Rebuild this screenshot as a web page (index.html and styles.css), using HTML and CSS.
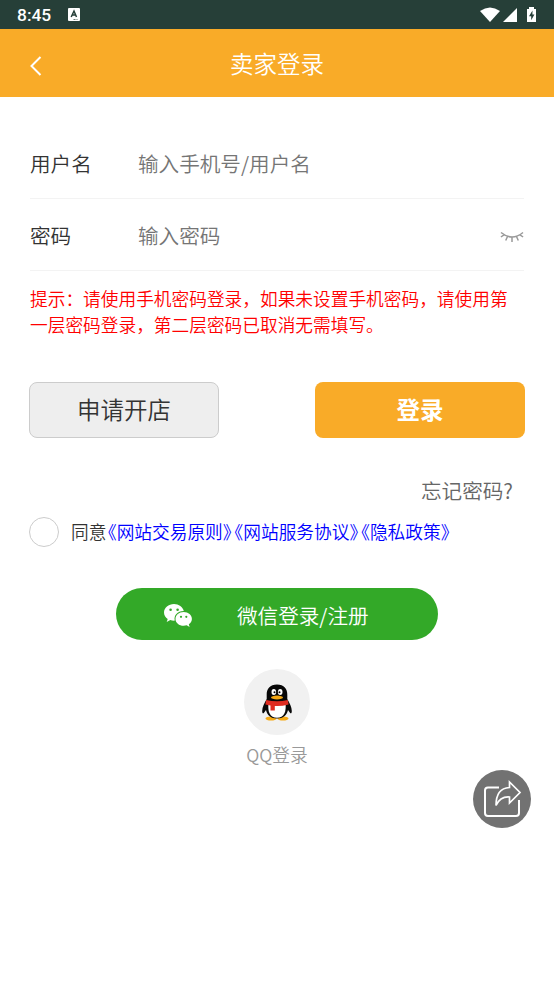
FILE: index.html
```html
<!DOCTYPE html>
<html lang="zh-CN">
<head>
<meta charset="utf-8">
<title>卖家登录</title>
<link rel="stylesheet" href="styles.css">
</head>
<body>
<div class="status">
  <span class="time">8:45</span>
  <svg class="app-icon" viewBox="0 0 12 14"><rect width="12" height="13" rx="1" fill="#fff"/><path d="M3.2 9 6 3l2.500 6M4.200 7h3.500" fill="none" stroke="#263f38" stroke-width="1.500"/><path d="M5.500 11.500h2M8.500 11.500h1" stroke="#263f38" stroke-width=".7"/></svg>
  <svg class="signals" viewBox="0 0 58 18" fill="#fff"><path d="M0 5Q10-2 20 5L10 16Z"/><path d="M23 16 37 2v14Z"/><path d="M49 1h5v2h2v13h-9V3h2Z"/><path d="M52.500 4.500 49 10.200h2.200v4l3.200-5.800h-2Z" fill="#263f38"/></svg>
</div>
<header class="header">
  <svg class="back" viewBox="0 0 12 20"><path d="m10.500 1-9 9 9 9" fill="none" stroke="#fff" stroke-width="2"/></svg>
  <h1>卖家登录</h1>
</header>
<main>
  <label class="field"><span>用户名</span><input type="text" placeholder="输入手机号/用户名"></label>
  <label class="field"><span>密码</span><input type="password" placeholder="输入密码">
    <svg class="eye" viewBox="0 0 24 12" fill="none" stroke="#999" stroke-width="1.500"><path d="M1 1.500Q12 10.500 23 1.500M4 3.900.9 6M7.400 5.700 5.700 9.500M12 6.500V11M16.600 5.700l1.700 3.800M20 3.900 23.100 6"/></svg>
  </label>
  <p class="hint">提示：请使用手机密码登录，如果未设置手机密码，请使用第一层密码登录，第二层密码已取消无需填写。</p>
  <div class="actions"><button class="apply">申请开店</button><button class="login">登录</button></div>
  <a class="forgot">忘记密码?</a>
  <div class="agree"><span class="radio"></span><span class="agree-text">同意<a>《网站交易原则》</a><a>《网站服务协议》</a><a>《隐私政策》</a></span></div>
  <button class="wechat">
    <svg viewBox="0 0 28 23"><path d="M10 0C4.500 0 0 3.800 0 8.500c0 2.700 1.500 5 3.700 6.500l-1 3 3.600-1.900c1.300.4 3 .6 4.500.5C9.500 11.500 13.500 7 19.500 7h.3C18.800 3 14.800 0 10 0Z" fill="#fff"/><path d="M19.700 8c-4.700 0-8.200 3.100-8.200 6.900s3.500 6.900 8.200 6.900c1 0 2-.2 3-.5l2.900 1.600-.8-2.600c1.900-1.300 3.100-3.200 3.100-5.400C27.900 11.100 24.300 8 19.700 8Z" fill="#fff"/><g fill="#33a928"><circle cx="6.600" cy="5.700" r="1.300"/><circle cx="13.600" cy="5.700" r="1.300"/><circle cx="17" cy="12.800" r="1.100"/><circle cx="22.300" cy="12.800" r="1.100"/></g></svg>
    <span>微信登录/注册</span>
  </button>
  <div class="qq">
    <div class="qq-circle">
      <svg viewBox="0 0 30 37"><ellipse cx="9" cy="34.500" rx="5.500" ry="2" fill="#f5a915"/><ellipse cx="21" cy="34.500" rx="5.500" ry="2" fill="#f5a915"/><path d="M15 .5C8 .5 4.500 5 4.700 11v4C2.500 19 .2 23 .2 27c0 2.500 1 3 2 1.500L4 26c1 5 5 8.500 11 8.500S25 31 26 26l1.800 2.500c1 1.500 2 1 2-1.500 0-4-2.300-8-4.500-12v-4C25.500 5 22 .5 15 .5Z" fill="#080808"/><path d="M6.500 19C5.500 28 8 33.800 15 33.800S24.500 28 23.500 19Z" fill="#fff"/><path d="M4.200 16Q15 18.500 25.800 16l.8 4.500Q19 22.500 12.800 22V26.500H8.500v-5L3.400 20.500Z" fill="#df2b20"/><ellipse cx="11.800" cy="8" rx="2.300" ry="3" fill="#fff"/><ellipse cx="18.200" cy="8" rx="2.300" ry="3" fill="#fff"/><circle cx="12.500" cy="8.300" r="1"/><circle cx="17.500" cy="8.300" r="1"/><ellipse cx="15" cy="13.500" rx="6" ry="1.900" fill="#f5a915"/></svg>
    </div>
    <span>QQ登录</span>
  </div>
</main>
<div class="share"><svg viewBox="0 0 58 58" fill="none" stroke="#fff" stroke-width="2"><path d="M26 17.500H15q-3 0-3 3V43q0 3 3 3h28q3 0 3-3V30"/><path d="M23 35.500C23 24 27 18 36.500 17.500V12L47 22.500 36.500 33v-6C30 26.500 26 29 23 35.500Z" stroke-width="1.700"/></svg></div>
</body>
</html>
```

FILE: styles.css
```css
* { box-sizing: border-box; }
body {
  margin: 0;
  height: 984px;
  overflow: hidden;
  background: #fff;
  color: #333;
  font-family: "Noto Sans CJK SC", sans-serif;
  font-size: 20.6px;
  font-weight: 350;
}
button, input { font: inherit; border: 0; padding: 0; margin: 0; background: none; }
.status {
  height: 29px;
  background: #263f38;
  display: flex;
  align-items: flex-start;
  padding: 0 17px;
}
.time { font: 500 17.4px/30px Roboto, sans-serif; color: #fff; width: 50px; }
.app-icon { width: 12px; height: 14px; margin: 8px 0 0 1px; }
.signals { width: 58px; height: 18px; margin: 6px -1px 0 auto; }
.header {
  height: 68px;
  background: #f9ab28;
  color: #fff;
  display: grid;
  grid-template-columns: 30px 1fr 30px;
  align-items: center;
}
.back { width: 12px; height: 20px; margin: 6px 0 0 30px; }
h1 { margin: 0; font-size: 23.5px; font-weight: 350; text-align: center; line-height: 68px; }
main { padding: 30px 30px 0; display: flex; flex-direction: column; }
.field {
  display: flex;
  align-items: center;
  height: 72px;
  border-bottom: 1px solid #f3f3f3;
}
.field > span { width: 108px; }
.field input { flex: 1; min-width: 0; height: 40px; }
.field input::placeholder { color: #757575; opacity: 1; }
.eye { width: 24px; height: 12px; margin-top: 5px; }
.hint { margin: 14px 0 0; color: #f00; font-size: 17.7px; line-height: 26px; width: 485px; }
.actions { display: flex; justify-content: space-between; margin: 45px -1px 0; }
.actions button { height: 56px; border-radius: 8px; font-size: 23.5px; padding-bottom: 2px; }
.apply { width: 190px; background: #eee; border: 1px solid #ccc; color: #333; }
.actions .login { width: 210px; background: #f9ab28; color: #fff; font-weight: 700; }
.forgot { align-self: flex-end; margin: 37px 11px 0 0; line-height: 30px; color: #666; }
.agree { display: flex; align-items: center; margin: 12px 0 0 -1px; height: 30px; font-size: 17.7px; }
.radio { width: 30px; height: 30px; border: 1px solid #ccc; border-radius: 50%; margin-right: 12px; }
.agree-text { display: flex; white-space: nowrap; padding-bottom: 2px; text-spacing-trim: space-all; }
.agree-text a { color: #00f; font-feature-settings: "halt"; margin: 0 0.08em; }
.wechat {
  align-self: center;
  width: 322px;
  height: 52px;
  margin-top: 41px;
  border-radius: 26px;
  background: #33a928;
  color: #fff;
  display: flex;
  align-items: center;
  padding-left: 48px;
}
.wechat svg { width: 28px; height: 23px; margin: 2px 45px 0 0; }
.wechat span { line-height: 30px; padding-top: 1px; }
.qq { align-self: center; margin-top: 29px; display: flex; flex-direction: column; align-items: center; color: #999; font-size: 17.7px; }
.qq-circle { width: 66px; height: 66px; border-radius: 50%; background: #f1f1f1; display: flex; align-items: center; justify-content: center; }
.qq-circle svg { width: 30px; height: 37px; }
.qq > span { line-height: 26px; margin-top: 6px; }
.share { position: fixed; left: 473px; top: 770px; width: 58px; height: 58px; border-radius: 50%; background: #727272; }
.share svg { display: block; width: 58px; height: 58px; }
```
